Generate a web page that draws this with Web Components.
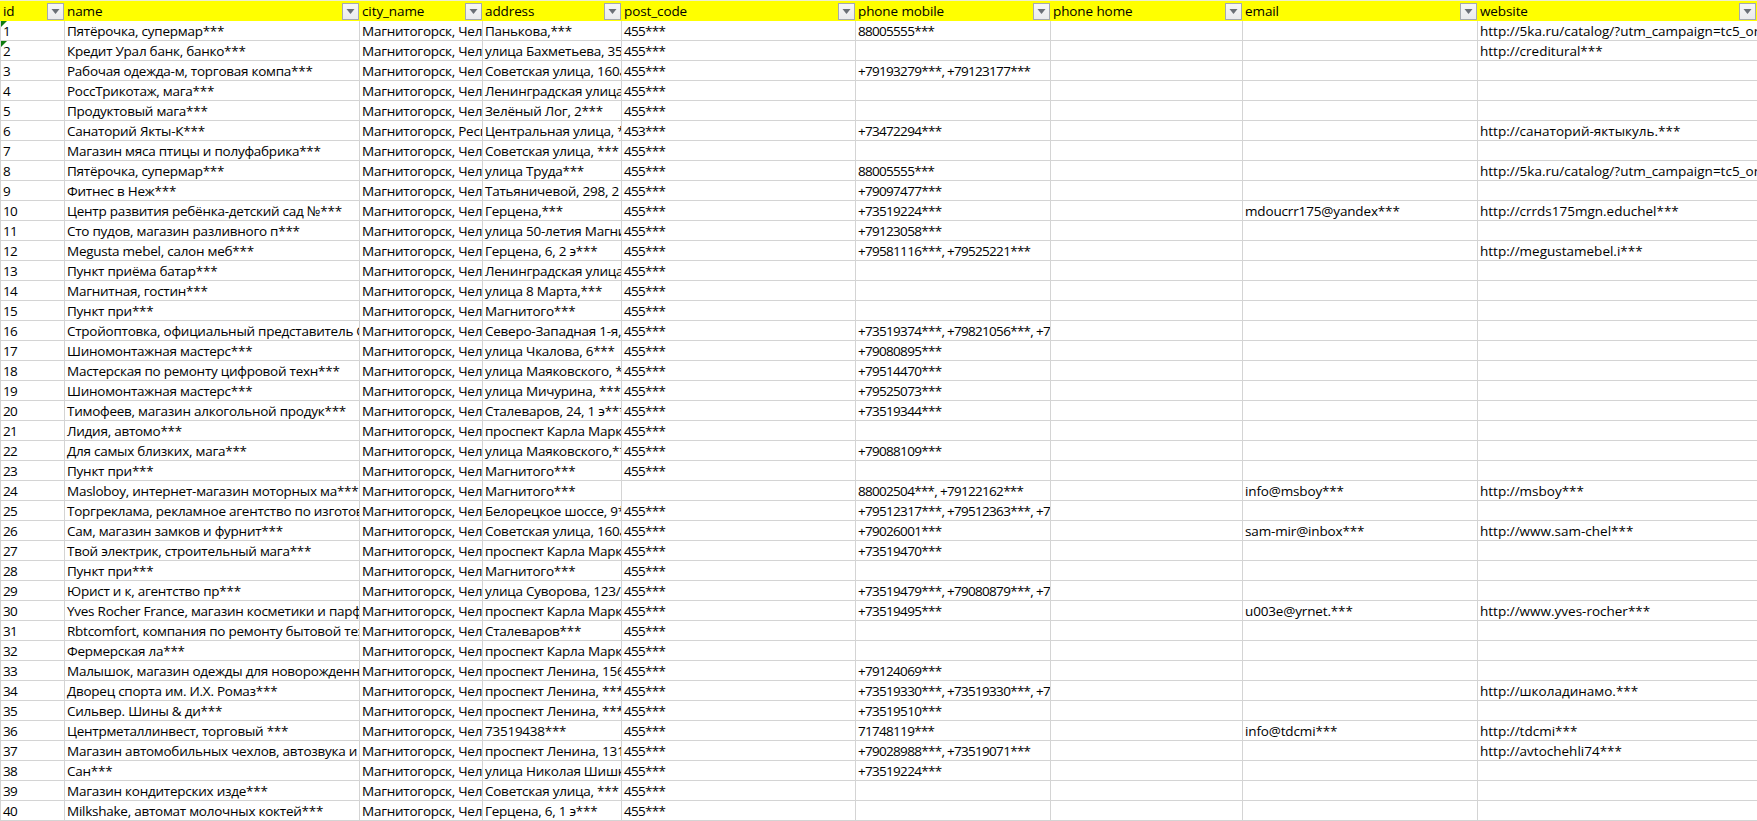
<!DOCTYPE html>
<html lang="ru"><head><meta charset="utf-8"><title>Sheet</title>
<style>html,body{margin:0;padding:0;background:#fff;overflow:hidden}
body{font-family:"Open Sans","Noto Sans",sans-serif}</style></head>
<body>
<xl-sheet></xl-sheet>
<script>
const COLS='65px 295px 123px 139px 234px 195px 192px 235px 280px';
class XlFilter extends HTMLElement{constructor(){super();this.attachShadow({mode:'open'}).innerHTML=`<style>
:host{position:absolute;right:var(--fr,1px);top:2px;width:17px;height:17px;box-sizing:border-box;border:1px solid #a4a9b0;background:linear-gradient(#f6f6f6,#eaebed);display:flex;align-items:center;justify-content:center}
svg{display:block}</style><svg width="9" height="5" viewBox="0 0 9 5"><path d="M0.5 0H8.5L4.5 5Z" fill="#6a6f76"/></svg>`}}
customElements.define('xl-filter',XlFilter);
class XlCell extends HTMLElement{constructor(){super();this.attachShadow({mode:'open'}).innerHTML=`<style>
:host{display:block;position:relative;box-sizing:border-box;overflow:hidden;white-space:nowrap;border-right:1px solid #d4d4d4;border-bottom:1px solid #d4d4d4;font:13.5px/19px "Open Sans","Noto Sans",sans-serif;color:#000;padding:1px 0 0 2px;height:20px;letter-spacing:0}
:host([kind=text]){letter-spacing:-.25px}
:host([kind=num]){letter-spacing:-.7px}
:host([kind=mail]){letter-spacing:-.15px}
:host([kind=id]){letter-spacing:-.7px;border-left:1px solid #d4d4d4}
:host([head]){height:21px;background:#ff0;border-right:0;border-left:0;border-bottom:0;border-top:1px solid #eeeecf;padding:0 0 0 2px;line-height:20px;letter-spacing:-.1px}
:host([head][first]){padding-left:3px}
:host([last]){--fr:2px}
:host([mark])::before{content:"";position:absolute;left:0;top:0;border-top:6px solid #107c10;border-right:6px solid transparent}
</style><slot></slot>`}}
customElements.define('xl-cell',XlCell);
class XlRow extends HTMLElement{constructor(){super();this.attachShadow({mode:'open'}).innerHTML=`<style>
:host{display:grid;grid-template-columns:${COLS}}</style><slot></slot>`}}
customElements.define('xl-row',XlRow);
const heads=['id','name','city_name','address','post_code','phone mobile','phone home','email','website'];
const names=`Пятёрочка, супермар***
Кредит Урал банк, банко***
Рабочая одежда-м, торговая компа***
РоссТрикотаж, мага***
Продуктовый мага***
Санаторий Якты-К***
Магазин мяса птицы и полуфабрика***
Пятёрочка, супермар***
Фитнес в Неж***
Центр развития ребёнка-детский сад №***
Сто пудов, магазин разливного п***
Megusta mebel, салон меб***
Пункт приёма батар***
Магнитная, гостин***
Пункт при***
Стройоптовка, официальный представитель ООО***
Шиномонтажная мастерс***
Мастерская по ремонту цифровой техн***
Шиномонтажная мастерс***
Тимофеев, магазин алкогольной продук***
Лидия, автомо***
Для самых близких, мага***
Пункт при***
Masloboy, интернет-магазин моторных ма***
Торгреклама, рекламное агентство по изготовлению***
Сам, магазин замков и фурнит***
Твой электрик, строительный мага***
Пункт при***
Юрист и к, агентство пр***
Yves Rocher France, магазин косметики и парфюмерии***
Rbtcomfort, компания по ремонту бытовой техники***
Фермерская ла***
Малышок, магазин одежды для новорожденных***
Дворец спорта им. И.Х. Ромаз***
Сильвер. Шины & ди***
Центрметаллинвест, торговый ***
Магазин автомобильных чехлов, автозвука и аксессуаров***
Сан***
Магазин кондитерских изде***
Milkshake, автомат молочных коктей***`.split('\n');
const addr=`Панькова,***
улица Бахметьева, 35***
Советская улица, 160а***
Ленинградская улица***
Зелёный Лог, 2***
Центральная улица, ***
Советская улица, ***
улица Труда***
Татьяничевой, 298, 2 э***
Герцена,***
улица 50-летия Магнитки***
Герцена, 6, 2 э***
Ленинградская улица***
улица 8 Марта,***
Магнитого***
Северо-Западная 1-я, ***
улица Чкалова, 6***
улица Маяковского, ***
улица Мичурина, ***
Сталеваров, 24, 1 э***
проспект Карла Маркса***
улица Маяковского,***
Магнитого***
Магнитого***
Белорецкое шоссе, 9***
Советская улица, 160а***
проспект Карла Маркса***
Магнитого***
улица Суворова, 123/***
проспект Карла Маркса***
Сталеваров***
проспект Карла Маркса***
проспект Ленина, 156***
проспект Ленина, ***
проспект Ленина, ***
73519438***
проспект Ленина, 131***
улица Николая Шишка***
Советская улица, ***
Герцена, 6, 1 э***`.split('\n');
const phones={1:'88005555***',3:'+79193279***, +79123177***',6:'+73472294***',8:'88005555***',9:'+79097477***',10:'+73519224***',11:'+79123058***',12:'+79581116***, +79525221***',16:'+73519374***, +79821056***, +7',17:'+79080895***',18:'+79514470***',19:'+79525073***',20:'+73519344***',22:'+79088109***',24:'88002504***, +79122162***',25:'+79512317***, +79512363***, +7',26:'+79026001***',27:'+73519470***',29:'+73519479***, +79080879***, +7',30:'+73519495***',33:'+79124069***',34:'+73519330***, +73519330***, +7',35:'+73519510***',36:'71748119***',37:'+79028988***, +73519071***',38:'+73519224***'};
const mails={10:'mdoucrr175@yandex***',24:'info@msboy***',26:'sam-mir@inbox***',30:'u003e@yrnet.***',36:'info@tdcmi***'};
const sites={1:'http://5ka.ru/catalog/?utm_campaign=tc5_org***',2:'http://creditural***',6:'http://санаторий-яктыкуль.***',8:'http://5ka.ru/catalog/?utm_campaign=tc5_org***',10:'http://crrds175mgn.educhel***',12:'http://megustamebel.i***',24:'http://msboy***',26:'http://www.sam-chel***',30:'http://www.yves-rocher***',34:'http://школадинамо.***',36:'http://tdcmi***',37:'http://avtochehli74***'};
class XlSheet extends HTMLElement{constructor(){super();const s=this.attachShadow({mode:'open'});
const esc=t=>t.replace(/&/g,'&amp;');
let h=`<style>:host{display:block;width:1757px;overflow:hidden}</style>`;
h+=`<xl-row>`+heads.map((t,i)=>`<xl-cell head${i==0?' first':''}${i==8?' last':''}>${t}<xl-filter></xl-filter></xl-cell>`).join('')+`</xl-row>`;
for(let i=1;i<=40;i++){const post=i==24?'':i==6?'453***':'455***';
h+=`<xl-row><xl-cell kind="id"${i<3?' mark':''}>${i}</xl-cell><xl-cell kind="text">${esc(names[i-1])}</xl-cell><xl-cell kind="text">${i==6?'Магнитогорск, Республика***':'Магнитогорск, Челябинская***'}</xl-cell><xl-cell kind="text">${addr[i-1]}</xl-cell><xl-cell kind="num">${post}</xl-cell><xl-cell kind="num">${phones[i]||''}</xl-cell><xl-cell></xl-cell><xl-cell kind="mail">${mails[i]||''}</xl-cell><xl-cell>${sites[i]||''}</xl-cell></xl-row>`}
s.innerHTML=h}}
customElements.define('xl-sheet',XlSheet);
</script>
</body></html>
